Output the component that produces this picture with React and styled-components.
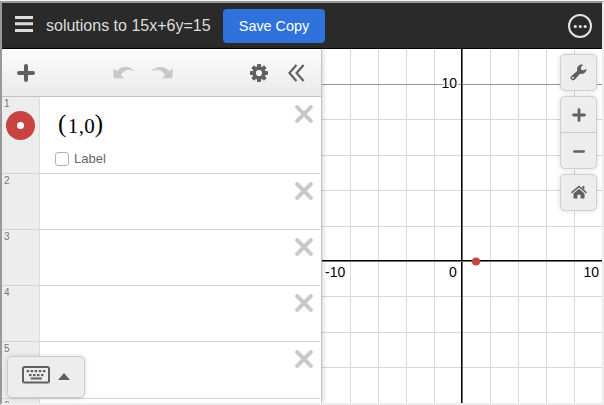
import React from "react";
import styled, { createGlobalStyle } from "styled-components";

const GlobalStyle = createGlobalStyle`
  * { box-sizing: border-box; }
  body { margin: 0; background: #ededed; font-family: "Liberation Sans", Arial, sans-serif; }
  svg { display: block; flex: none; }
`;

const Frame = styled.div`
  width: 604px;
  height: 404px;
  overflow: hidden;
  border-style: solid;
  border-width: 2px;
  border-color: #999 #ededed #ededed #999;
  display: flex;
  flex-direction: column;
`;

const Page = styled.div`
  height: 405px;
  overflow: hidden;
  padding-top: 1px;
  background: linear-gradient(#f6f6f6 1px, #ededed 1px);
`;

const Header = styled.header`
  flex: none;
  height: 46px;
  background: #2a2a2a;
  border-bottom: 1px solid #000;
  display: flex;
  align-items: center;
  padding: 0 9px 0 13px;
`;

const Title = styled.h1`
  margin: 1px 12px 0 13px;
  font-size: 16px;
  line-height: 20px;
  font-weight: 400;
  color: #ddd;
  white-space: nowrap;
  width: 165px;
`;

const SaveButton = styled.button`
  width: 102px;
  height: 34px;
  border: 0;
  border-radius: 4px;
  padding: 0;
  background: #2f72dc;
  color: #fff;
  font: 14.4px/34px "Liberation Sans", Arial, sans-serif;
  margin-right: auto;
`;

const Main = styled.main`
  flex: 1;
  min-height: 0;
  display: flex;
`;

const Sidebar = styled.section`
  width: 320px;
  flex: none;
  position: relative;
  z-index: 1;
  background: #fff;
  border-right: 1px solid #c4c4c4;
  box-shadow: 0 0 6px rgba(0, 0, 0, 0.25);
  display: flex;
  flex-direction: column;
`;

const Toolbar = styled.div`
  flex: none;
  height: 48px;
  border-bottom: 1px solid #c4c4c4;
  background: linear-gradient(#fcfcfc, #eaeaea);
  display: flex;
  align-items: center;
  padding: 1px 16px 0 15px;
`;

const History = styled.div`
  display: flex;
  gap: 16px;
  margin: 0 77px 2px auto;
`;

const ToolGroup = styled.div`
  display: flex;
  align-items: center;
  gap: 20px;
`;

const List = styled.div`
  flex: 1;
  min-height: 0;
  overflow: hidden;
`;

const Row = styled.div`
  height: ${(p) => p.$height}px;
  display: flex;
`;

const Gutter = styled.div`
  width: 38px;
  flex: none;
  background: #ededed;
  border-right: 1px solid #dcdcdc;
  border-bottom: 1px solid #d4d4d4;
  padding: 1px 0 0 2px;
  font-size: 10px;
  line-height: 12px;
  color: #777;
`;

const PointIcon = styled.div`
  width: 29px;
  height: 29px;
  margin: 1px 0 0 2px;
  border-radius: 50%;
  background: #c74440;
  display: grid;
  place-items: center;
  &::after {
    content: "";
    width: 7px;
    height: 7px;
    border-radius: 50%;
    background: #fff;
  }
`;

const Cell = styled.div`
  flex: 1;
  border-bottom: 1px solid #d4d4d4;
  margin-right: 1px;
  display: flex;
  justify-content: space-between;
  padding: 8px 7px 0 15px;
`;

const Formula = styled.div`
  height: 40px;
  padding-left: 3px;
  display: flex;
  align-items: center;
  color: #000;
  font: 21px/40px "Liberation Serif", "Times New Roman", serif;
`;

const Paren = styled.span`
  font-size: 25px;
  line-height: 36px;
  padding-bottom: 3px;
`;

const Digits = styled.span`
  width: 27px;
  margin: 1px 0 0 1.5px;
  letter-spacing: 0.3px;
`;

const LabelOption = styled.label`
  display: flex;
  align-items: center;
  gap: 5px;
  font-size: 13px;
  line-height: 16px;
  margin-top: 6px;
  color: #666;
`;

const Box = styled.span`
  width: 14px;
  height: 14px;
  border: 1px solid #b3b3b3;
  border-radius: 3px;
  background: #fff;
`;

const Keypad = styled.button`
  position: absolute;
  left: 5px;
  bottom: 5px;
  width: 78px;
  height: 42px;
  padding: 0 14px 4px;
  border: 1px solid #ccc;
  border-radius: 5px;
  background: #ededed;
  box-shadow: 0 0 5px rgba(0, 0, 0, 0.15);
  display: flex;
  align-items: center;
  gap: 8px;
`;

const GraphArea = styled.section`
  flex: 1;
  min-width: 0;
  position: relative;
  background: #fff;
`;

const Controls = styled.div`
  position: absolute;
  top: 5px;
  right: 5px;
  display: flex;
  flex-direction: column;
  gap: 5px;
`;

const ControlGroup = styled.div`
  width: 37px;
  border: 1px solid #d0d0d0;
  border-radius: 5px;
  background: #ededed;
  box-shadow: 0 0 5px rgba(0, 0, 0, 0.15);
`;

const Control = styled.button`
  width: 100%;
  height: 35px;
  padding: 0;
  border: 0;
  background: none;
  display: grid;
  place-items: center;
  & + & {
    height: 36px;
    border-top: 1px solid #ccc;
  }
`;

const INK = "#606060";

const Menu = () => (
  <svg width="18" height="20" fill="#ddd">
    <path d="M0 0h18v3H0zM0 6.3h18v3H0zM0 13h18v3H0z" />
  </svg>
);

const More = () => (
  <svg width="26" height="26" fill="#e4e4e4">
    <circle cx="13" cy="13" r="11" fill="none" stroke="#e4e4e4" strokeWidth="2" />
    <circle cx="8.3" cy="13.5" r="1.6" />
    <circle cx="13.3" cy="13.5" r="1.6" />
    <circle cx="18.2" cy="13.5" r="1.6" />
  </svg>
);

const Plus = ({ size, weight }) => (
  <svg width={size} height={size} viewBox="0 0 18 18" stroke={INK} strokeWidth={weight} strokeLinecap="round">
    <path d="M2 9h14M9 2v14" />
  </svg>
);

const Undo = ({ flip }) => (
  <svg width="22" height="13" viewBox="0 0 22 13" fill="#c8c8c8">
    <path
      transform={flip ? "translate(22 0) scale(-1 1)" : undefined}
      d="M.5 2.2 3.6 5.2C8-.2 17.5-1 21.7 5.6 16.5 2.2 11.5 3.4 7.9 9L11 12.2H1.6Q.5 12.2 .5 11.2Z"
    />
  </svg>
);

const Gear = () => (
  <svg width="18" height="18" viewBox="-9 -9 18 18" fill={INK}>
    {[0, 45, 90, 135].map((a) => (
      <rect key={a} x="-2" y="-9" width="4" height="18" rx="0.8" transform={`rotate(${a})`} />
    ))}
    <circle r="6.7" />
    <circle r="3.1" fill="#f3f3f3" />
  </svg>
);

const Collapse = () => (
  <svg width="17" height="18" viewBox="0 0 17 18" fill="none" stroke={INK} strokeWidth="2.2">
    <path d="M8.4 1 1.4 9l7 8M15.6 1 8.6 9l7 8" />
  </svg>
);

const Close = () => (
  <svg width="18" height="18" viewBox="0 0 18 18" stroke="#c8c8c8" strokeWidth="4" strokeLinecap="round">
    <path d="m2.2 2.2 13.6 13.6M15.8 2.2 2.2 15.8" />
  </svg>
);

const Wrench = () => (
  <svg width="17" height="17" viewBox="0 0 17 17">
    <path
      fill={INK}
      d="M13.2.6 10.9 3.4l.4 2.4 2.4.5 2.7-1.6C16.6 7.6 14.4 10.2 11.7 10q-1 0-1.7-.3L4.9 15.6C2.5 17.9-.9 14.8 1.1 12.2L7.2 7C6.2 3.2 9.2-.3 13.2.6Z"
    />
    <circle cx="2.9" cy="13.8" r="1" fill="#ededed" />
  </svg>
);

const Minus = () => (
  <svg width="12" height="12" stroke={INK} strokeWidth="2.6" strokeLinecap="round">
    <path d="M1.3 6.5h9.4" />
  </svg>
);

const Home = () => (
  <svg width="16" height="15" viewBox="0 0 16 15" fill={INK}>
    <path d="M8 3.8 13.5 8.4V13q0 .6-.6.6H9.6V9.8H6.4v3.8H3.1q-.6 0-.6-.6V8.4Z" />
    <path d="M11.3 1h2.1v3.8l-2.1-1.7Z" />
    <path d="M1 7.4 8 1.5l7 5.9" fill="none" stroke={INK} strokeWidth="1.5" strokeLinecap="round" />
  </svg>
);

const KeyboardIcon = () => (
  <svg width="28" height="18" viewBox="0 0 28 18" fill={INK}>
    <rect x="1" y="1" width="26" height="15.4" rx="1.5" fill="none" stroke={INK} strokeWidth="2" />
    {[4.6, 8.6, 12.6, 16.8, 20.9].map((x) => (
      <rect key={x} x={x} y="4" width="2.5" height="2.2" />
    ))}
    {[7, 11, 15, 19].map((x) => (
      <rect key={x} x={x} y="8" width="2.5" height="2.2" />
    ))}
    <rect x="8.5" y="11.6" width="11.5" height="2" rx="0.8" />
  </svg>
);

const Triangle = () => (
  <svg width="12" height="12" fill={INK}>
    <path d="M0 11 6 4l6 7Z" />
  </svg>
);

const gridX = [28, 56, 84, 112, 168, 196, 224, 252];
const gridY = [70, 106, 141, 177, 247, 283, 318];

const Graph = () => (
  <svg width="280" height="354" fontFamily="Liberation Sans, Arial, sans-serif" fontSize="14">
    <g fill="#d8d8d8">
      {gridX.map((x) => (
        <rect key={x} x={x} y="0" width="1" height="354" />
      ))}
      {gridY.map((y) => (
        <rect key={y} x="0" y={y} width="280" height="1" />
      ))}
    </g>
    <rect y="35" width="280" height="1" fill="#969696" />
    <rect x="139" width="1" height="354" fill="#000" />
    <rect x="140" width="1" height="354" fill="#707070" />
    <rect y="211" width="280" height="1" fill="#000" />
    <rect y="212" width="280" height="1" fill="#707070" />
    <g stroke="#fff" strokeWidth="3" paintOrder="stroke" fill="#000">
      <text x="119.5" y="39">10</text>
      <text x="3" y="228">-10</text>
      <text x="127" y="228">0</text>
      <text x="261.5" y="228">10</text>
    </g>
    <circle cx="154" cy="212.5" r="4.1" fill="#c74440" />
  </svg>
);

export default function App() {
  return (
    <Page>
      <GlobalStyle />
      <Frame>
        <Header>
          <Menu />
          <Title>solutions to 15x+6y=15</Title>
          <SaveButton>Save Copy</SaveButton>
          <More />
        </Header>
        <Main>
          <Sidebar>
            <Toolbar>
              <Plus size={18} weight={4} />
              <History>
                <Undo />
                <Undo flip />
              </History>
              <ToolGroup>
                <Gear />
                <Collapse />
              </ToolGroup>
            </Toolbar>
            <List>
              <Row $height={77}>
                <Gutter>
                  1
                  <PointIcon />
                </Gutter>
                <Cell>
                  <div>
                    <Formula>
                      <Paren>(</Paren>
                      <Digits>1,0</Digits>
                      <Paren>)</Paren>
                    </Formula>
                    <LabelOption>
                      <Box />
                      Label
                    </LabelOption>
                  </div>
                  <Close />
                </Cell>
              </Row>
              {[2, 3, 4, 5, 6].map((n) => (
                <Row key={n} $height={n === 5 ? 57 : 56}>
                  <Gutter>{n}</Gutter>
                  <Cell>
                    <span />
                    <Close />
                  </Cell>
                </Row>
              ))}
            </List>
            <Keypad aria-label="Open keypad">
              <KeyboardIcon />
              <Triangle />
            </Keypad>
          </Sidebar>
          <GraphArea>
            <Graph />
            <Controls>
              <ControlGroup>
                <Control aria-label="Settings"><Wrench /></Control>
              </ControlGroup>
              <ControlGroup>
                <Control aria-label="Zoom in"><Plus size={14} weight={3.6} /></Control>
                <Control aria-label="Zoom out"><Minus /></Control>
              </ControlGroup>
              <ControlGroup>
                <Control aria-label="Default view"><Home /></Control>
              </ControlGroup>
            </Controls>
          </GraphArea>
        </Main>
      </Frame>
    </Page>
  );
}
